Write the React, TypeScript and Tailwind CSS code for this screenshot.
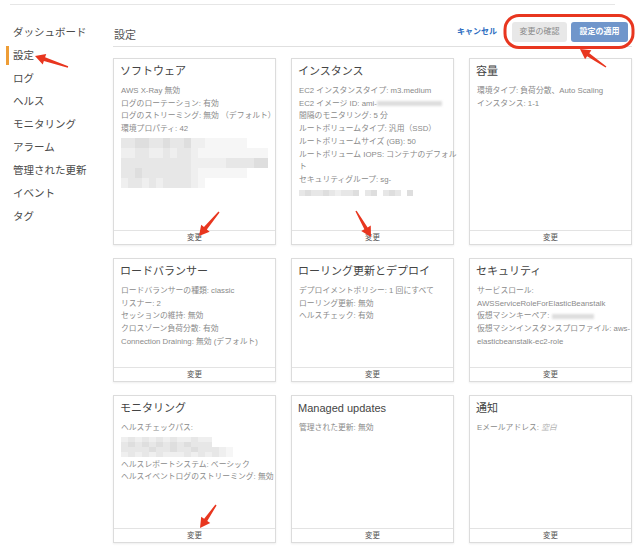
import React from 'react';

const SHADE: Record<string, string> = {
  '.': 'bg-transparent',
  '1': 'bg-[#f6f6f6]',
  '2': 'bg-[#efefef]',
  '3': 'bg-[#e7e7e7]',
  '4': 'bg-[#dedede]',
};

// pixelated blur block, one string per row
const Mosaic: React.FC<{ rows: string[]; cell?: string }> = ({ rows, cell = 'w-[7px] h-[10px]' }) => (
  <div className="flex flex-col">
    {rows.map((row, i) => (
      <div key={i} className="flex">
        {row.split('').map((c, j) => (
          <div key={j} className={`${cell} ${SHADE[c]}`} />
        ))}
      </div>
    ))}
  </div>
);

const Blur: React.FC<{ w: string }> = ({ w }) => (
  <span className={`inline-block ${w} h-[5px] bg-[#dedede] blur-[1px] align-middle`} />
);

const Line: React.FC<{ children: React.ReactNode }> = ({ children }) => (
  <div className="leading-[12.7px] whitespace-nowrap">{children}</div>
);

interface CardProps {
  title: string;
  children: React.ReactNode;
}

const Card: React.FC<CardProps> = ({ title, children }) => (
  <div className="flex flex-col bg-white border border-[#dcdcdc] shadow-[0_1px_2px_rgba(0,0,0,0.07)]">
    <div className="flex-1 px-[6px] pt-[4px]">
      <h3 className="text-[11px] leading-[16px] text-[#444] mb-[6px] whitespace-nowrap">{title}</h3>
      <div className="text-[7.8px] text-[#8a8a8a] pl-[1px]">{children}</div>
    </div>
    <div className="h-[14px] border-t border-[#e3e3e3] text-center text-[7.5px] leading-[13px] text-[#555]">変更</div>
  </div>
);

const NAV = ['ダッシュボード', '設定', 'ログ', 'ヘルス', 'モニタリング', 'アラーム', '管理された更新', 'イベント', 'タグ'];

type Pt = [number, number];

const arrow = (tail: Pt, tip: Pt) => {
  const dx = tip[0] - tail[0];
  const dy = tip[1] - tail[1];
  const len = Math.hypot(dx, dy);
  const ux = dx / len, uy = dy / len;
  const px = -uy, py = ux;
  const head = 10, hw = 5.5, sw = 1.9, tw = 0.7;
  const bx = tip[0] - ux * head, by = tip[1] - uy * head;
  const pts: Pt[] = [
    [tail[0] + px * tw, tail[1] + py * tw],
    [bx + px * sw, by + py * sw],
    [bx + px * hw, by + py * hw],
    tip,
    [bx - px * hw, by - py * hw],
    [bx - px * sw, by - py * sw],
    [tail[0] - px * tw, tail[1] - py * tw],
  ];
  return pts.map(p => p.join(',')).join(' ');
};

const ARROWS: [Pt, Pt][] = [
  [[68, 67], [35, 56]],
  [[606, 67], [580, 49]],
  [[219, 212], [199, 236]],
  [[356, 211], [371, 237]],
  [[216, 505], [200, 528]],
];

export default function App() {
  return (
    <div className="relative w-[640px] h-[555px] bg-white overflow-hidden font-['Liberation_Sans','Noto_Sans_CJK_JP',sans-serif]">
      <div className="ml-[10px] mt-[4px] w-[605px] h-px bg-[#e6e6e6]" />

      <div className="flex">
        {/* sidebar */}
        <nav className="w-[113px] shrink-0 pt-[16px] pl-[6px]">
          {NAV.map(item => (
            <div key={item} className="flex items-center h-[23px]">
              <span className={`w-[3px] h-[19px] mr-[4px] ${item === '設定' ? 'bg-[#ee9d36]' : 'bg-transparent'}`} />
              <span className="text-[10.5px] text-[#4a4a4a] whitespace-nowrap">{item}</span>
            </div>
          ))}
        </nav>

        {/* main */}
        <main className="w-[519px] shrink-0">
          <div className="h-[42px] flex items-end pb-[4px] pr-[4px] border-b border-[#e0e0e0]">
            <span className="flex-1 pl-[1px] text-[11px] leading-[14px] text-[#555]">設定</span>
            <span className="mr-[15px] text-[8px] leading-[20px] font-bold text-[#2a6bbf]">キャンセル</span>
            <button className="w-[55px] h-[20px] rounded-[3px] bg-[#e8e8e8] text-[8px] text-[#8a8a8a]">変更の確認</button>
            <button className="ml-[4px] w-[57px] h-[20px] rounded-[3px] bg-[#7096cb] text-[8px] font-bold text-white">設定の適用</button>
          </div>

          <div className="mt-[11px] grid grid-cols-[163px_163px_163px] grid-rows-[187px_124px_148px] gap-x-[15px] gap-y-[13px]">
            <Card title="ソフトウェア">
              <Line>AWS X-Ray 無効</Line>
              <Line>ログのローテーション: 有効</Line>
              <Line>ログのストリーミング: 無効 （デフォルト）</Line>
              <Line>環境プロパティ: 42</Line>
              <div className="mt-[2px]">
                <Mosaic
                  rows={[
                    '334433433422111111...',
                    '223322323321111111111',
                    '333333333322222333344',
                    '334333333321111111...',
                    '233232333321.........',
                  ]}
                />
              </div>
            </Card>

            <Card title="インスタンス">
              <Line>EC2 インスタンスタイプ: m3.medium</Line>
              <Line>EC2 イメージ ID: ami-<Blur w="w-[65px]" /></Line>
              <Line>間隔のモニタリング: 5 分</Line>
              <Line>ルートボリュームタイプ: 汎用（SSD）</Line>
              <Line>ルートボリュームサイズ (GB): 50</Line>
              <Line>ルートボリューム IOPS: コンテナのデフォル</Line>
              <Line>ト</Line>
              <Line>セキュリティグループ: sg-</Line>
              <div className="h-[12.7px] flex items-center">
                <Mosaic rows={['3433432334.34.343.4']} cell="w-[6px] h-[6px]" />
              </div>
            </Card>

            <Card title="容量">
              <Line>環境タイプ: 負荷分散、Auto Scaling</Line>
              <Line>インスタンス: 1-1</Line>
            </Card>

            <Card title="ロードバランサー">
              <Line>ロードバランサーの種類: classic</Line>
              <Line>リスナー: 2</Line>
              <Line>セッションの維持: 無効</Line>
              <Line>クロスゾーン負荷分散: 有効</Line>
              <Line>Connection Draining: 無効 (デフォルト)</Line>
            </Card>

            <Card title="ローリング更新とデプロイ">
              <Line>デプロイメントポリシー: 1 回にすべて</Line>
              <Line>ローリング更新: 無効</Line>
              <Line>ヘルスチェック: 有効</Line>
            </Card>

            <Card title="セキュリティ">
              <Line>サービスロール:</Line>
              <Line>AWSServiceRoleForElasticBeanstalk</Line>
              <Line>仮想マシンキーペア: <Blur w="w-[42px]" /></Line>
              <Line>仮想マシンインスタンスプロファイル: aws-</Line>
              <Line>elasticbeanstalk-ec2-role</Line>
            </Card>

            <Card title="モニタリング">
              <Line>ヘルスチェックパス:</Line>
              <div className="py-[2px]">
                <Mosaic
                  rows={['2323232322322', '3434343434333', '3333433433433321', '2323232223232321']}
                  cell="w-[7px] h-[5px]"
                />
              </div>
              <Line>ヘルスレポートシステム: ベーシック</Line>
              <Line>ヘルスイベントログのストリーミング: 無効</Line>
            </Card>

            <Card title="Managed updates">
              <Line>管理された更新: 無効</Line>
            </Card>

            <Card title="通知">
              <Line>
                Eメールアドレス: <span className="italic text-[#b0b0b0]">空白</span>
              </Line>
            </Card>
          </div>
        </main>
      </div>

      {/* red annotations */}
      <svg className="absolute inset-0 pointer-events-none" width="640" height="555" viewBox="0 0 640 555">
        <rect x="505" y="15.5" width="128" height="32" rx="14" fill="none" stroke="#e8361f" strokeWidth="3" />
        {ARROWS.map(([tail, tip], i) => (
          <polygon key={i} points={arrow(tail, tip)} fill="#e8361f" />
        ))}
      </svg>
    </div>
  );
}
